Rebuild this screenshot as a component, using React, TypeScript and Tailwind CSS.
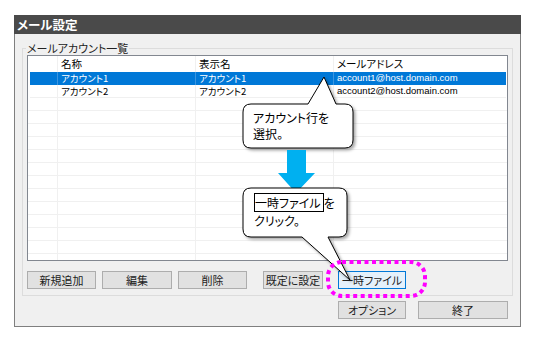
import React from 'react';

const rows = [
  { name: 'アカウント1', display: 'アカウント1', mail: 'account1@host.domain.com', selected: true },
  { name: 'アカウント2', display: 'アカウント2', mail: 'account2@host.domain.com', selected: false },
];

const Btn: React.FC<{ label: string; className?: string; active?: boolean }> = ({ label, className = '', active }) => (
  <div
    className={`h-[18px] flex items-center justify-center text-[11px] leading-none text-[#222] border ${
      active ? 'bg-[#e5f1fb] border-[#0078d7]' : 'bg-[#e1e1e1] border-[#adadad]'
    } ${className}`}
  >
    {label}
  </div>
);

const App: React.FC = () => {
  const emptyRows = Array.from({ length: 13 });

  return (
    <div className="relative w-[537px] h-[345px] bg-white overflow-hidden font-['Noto_Sans_CJK_JP',sans-serif] [font-feature-settings:'palt']">
      <div className="pt-[15px] pl-[14px]">
        {/* window */}
        <div className="w-[507px] h-[312px] flex flex-col bg-[#f0f0f0] border-x border-b border-[#7f7f7f]">
          <div className="h-[19px] -mx-px bg-[#4a4a4a] text-white font-bold text-[12.5px] leading-[19px] pl-[3px]">
            メール設定
          </div>

          {/* group box */}
          <div className="relative ml-[7px] mt-[14px] w-[491px] h-[248px] border border-[#dcdcdc] pl-[4px] pt-[6px]">
            <div className="absolute -top-[8px] left-[3px] bg-[#f0f0f0] px-px text-[11px] leading-[14px] text-[#222]">
              メールアカウント一覧
            </div>

            {/* list */}
            <div className="w-[481px] h-[206px] border border-[#828790] bg-white overflow-hidden text-[9.5px] text-black">
              <div className="flex h-[16px] leading-[16px] text-[10.5px]">
                <div className="w-[30px] border-r border-[#f0f0f0]" />
                <div className="w-[138px] pl-[3px] border-r border-[#f0f0f0]">名称</div>
                <div className="w-[138px] pl-[3px] border-r border-[#f0f0f0]">表示名</div>
                <div className="flex-1 pl-[3px]">メールアドレス</div>
              </div>
              {rows.map((r) => (
                <div key={r.mail} className="flex h-[13px] leading-[12px]">
                  <div className="w-[2px]" />
                  <div className={`flex flex-1 mr-px ${r.selected ? 'bg-[#0078d7] text-white' : 'border-b border-[#f0f0f0]'}`}>
                    <div className={`w-[28px] border-r ${r.selected ? 'border-[#3c95df]' : 'border-[#f0f0f0]'}`} />
                    <div className={`w-[138px] pl-[3px] border-r ${r.selected ? 'border-[#3c95df]' : 'border-[#f0f0f0]'}`}>{r.name}</div>
                    <div className={`w-[138px] pl-[3px] border-r ${r.selected ? 'border-[#3c95df]' : 'border-[#f0f0f0]'}`}>{r.display}</div>
                    <div className="flex-1 pl-[3px] font-['Liberation_Sans',sans-serif] text-[9.5px]">{r.mail}</div>
                  </div>
                </div>
              ))}
              {emptyRows.map((_, i) => (
                <div key={i} className="flex h-[13px] border-b border-[#f0f0f0]">
                  <div className="w-[30px] border-r border-[#f0f0f0]" />
                  <div className="w-[138px] border-r border-[#f0f0f0]" />
                  <div className="w-[138px] border-r border-[#f0f0f0]" />
                  <div className="flex-1" />
                </div>
              ))}
            </div>

            <div className="flex mt-[10px]">
              <Btn label="新規追加" className="w-[69px]" />
              <Btn label="編集" className="w-[70px] ml-[6px]" />
              <Btn label="削除" className="w-[69px] ml-[6px]" />
              <Btn label="既定に設定" className="w-[60px] ml-[16px]" />
              <Btn label="一時ファイル" className="w-[68px] ml-[15px]" active />
            </div>
          </div>

          <div className="flex justify-end mt-[5px] pr-[12px]">
            <Btn label="オプション" className="w-[68px]" />
            <Btn label="終了" className="w-[90px] ml-[12px]" />
          </div>
        </div>
      </div>

      {/* annotations */}
      <svg className="absolute inset-0 pointer-events-none" width="537" height="345" viewBox="0 0 537 345">
        <defs>
          <filter id="sh" x="-20%" y="-20%" width="140%" height="140%">
            <feDropShadow dx="2" dy="2" stdDeviation="1.5" floodColor="#000" floodOpacity="0.35" />
          </filter>
        </defs>
        <path
          d="M251 104 H308 L324 77 L336 104 H345 Q353 104 353 112 V140 Q353 148 345 148 H251 Q243 148 243 140 V112 Q243 104 251 104 Z"
          fill="#fff"
          stroke="#000"
          strokeWidth="1"
          filter="url(#sh)"
        />
        <polygon points="287,150 306,150 306,173 315,173 296,193 278,173 287,173" fill="#00b0f0" />
        <path
          d="M251 188 H339 Q347 188 347 196 V229 Q347 237 339 237 H328 L350 280 L302 237 H251 Q243 237 243 229 V196 Q243 188 251 188 Z"
          fill="#fff"
          stroke="#000"
          strokeWidth="1"
          filter="url(#sh)"
        />
        <rect
          x="328"
          y="262"
          width="97"
          height="34"
          rx="14"
          fill="none"
          stroke="#ff00ff"
          strokeWidth="4"
          strokeDasharray="4 3.5"
        />
      </svg>

      <div className="absolute left-[253px] top-[110px] text-[12px] leading-[16px] text-black">
        アカウント行を
        <br />
        選択。
      </div>
      <div className="absolute left-[254px] top-[193px] text-[12px] leading-[17px] text-black">
        <span className="inline-block border border-black leading-[17px] pr-[2px]">一時ファイル</span>を
        <br />
        クリック。
      </div>
    </div>
  );
};

export default App;
